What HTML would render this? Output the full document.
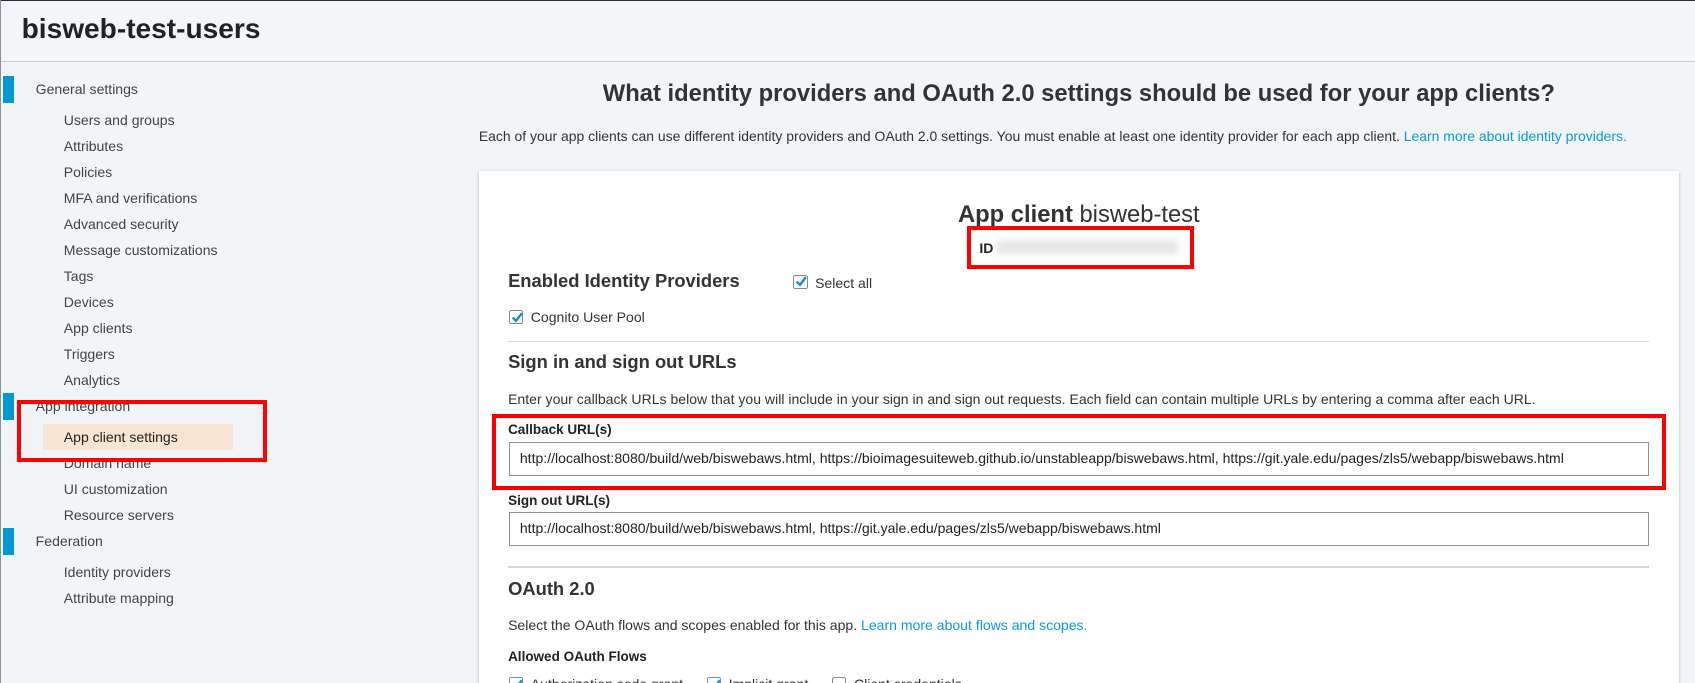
<!DOCTYPE html>
<html><head><meta charset="utf-8"><style>
html,body{margin:0;padding:0;width:1695px;height:683px;overflow:hidden;background:#f2f5f7}
#w{zoom:1.081;position:relative;width:1568px;height:632px;font-family:"Liberation Sans",sans-serif;color:#444;font-size:13px}
.a{position:absolute;white-space:nowrap}
.hdr{left:0;top:0;width:1568px;height:57px;background:#f3f6f8;border-bottom:1px solid #c8cccf;border-top:1px solid #232f3e;box-sizing:border-box}
.mk{position:absolute;left:3px;width:10px;height:25px;background:#0099d3}
.sec{left:33px;font-size:13px;color:#444}
.it{left:59px;color:#444}
.card{left:443px;top:158px;width:1110px;height:500px;background:#fff;box-shadow:0 1px 3px rgba(0,0,0,.25)}
.rb{position:absolute;border:4px solid #f00;box-sizing:border-box}
.cb{position:absolute;width:13px;height:13px;border:1px solid #888;border-radius:2px;background:#fff;box-sizing:border-box}
.cb svg{position:absolute;left:0;top:-1px}
.inp{position:absolute;left:471px;width:1054px;height:31px;border:1px solid #879596;box-sizing:border-box;background:#fff;padding-left:9px;line-height:29px;color:#222;font-size:13px;white-space:nowrap}
.hr{position:absolute;left:470px;width:1055px;height:1px;background:#d5d5d5}
b{color:#333}
.lk{color:#0a9ad8}
</style></head><body><div id="w">
<div class="a hdr"></div>
<div style="position:absolute;left:0;top:0;width:1px;height:632px;background:#8a939c"></div>
<div class="a" style="left:20px;top:12px;font-size:26px;font-weight:bold;color:#222">bisweb-test-users</div>

<div class="mk" style="top:70px"></div>
<div class="mk" style="top:364px"></div>
<div class="mk" style="top:488px"></div>
<div class="a sec" style="top:75px">General settings</div>
<div class="a it" style="top:104px">Users and groups</div>
<div class="a it" style="top:128px">Attributes</div>
<div class="a it" style="top:152px">Policies</div>
<div class="a it" style="top:176px">MFA and verifications</div>
<div class="a it" style="top:200px">Advanced security</div>
<div class="a it" style="top:224px">Message customizations</div>
<div class="a it" style="top:248px">Tags</div>
<div class="a it" style="top:272px">Devices</div>
<div class="a it" style="top:296px">App clients</div>
<div class="a it" style="top:320px">Triggers</div>
<div class="a it" style="top:344px">Analytics</div>
<div class="a sec" style="top:368px">App integration</div>
<div style="position:absolute;left:40px;top:392px;width:176px;height:24px;background:#f7e4d2"></div>
<div class="a it" style="top:397px;color:#222">App client settings</div>
<div class="a it" style="top:421px">Domain name</div>
<div class="a it" style="top:445px">UI customization</div>
<div class="a it" style="top:469px">Resource servers</div>
<div class="a sec" style="top:493px">Federation</div>
<div class="a it" style="top:522px">Identity providers</div>
<div class="a it" style="top:546px">Attribute mapping</div>
<div class="rb" style="left:16px;top:370px;width:231px;height:57px"></div>

<div class="a" style="left:443px;width:1110px;text-align:center;top:74px;font-size:22px;font-weight:bold;color:#333">What identity providers and OAuth 2.0 settings should be used for your app clients?</div>
<div class="a" style="left:443px;top:118px;color:#333;font-size:12.9px">Each of your app clients can use different identity providers and OAuth 2.0 settings. You must enable at least one identity provider for each app client. <span class="lk">Learn more about identity providers.</span></div>

<div class="a card"></div>
<div class="a" style="left:443px;width:1110px;text-align:center;top:186px;font-size:22px;color:#333"><b>App client</b> bisweb-test</div>
<div class="rb" style="left:895px;top:209px;width:210px;height:40px"></div>
<div class="a" style="left:906px;top:222px;font-weight:bold;color:#222;font-size:13px">ID</div>
<div style="position:absolute;left:922px;top:222px;width:168px;height:13px;background:#e6e6e6;filter:blur(3px)"></div>

<div class="a" style="left:470px;top:250px;font-size:17px;font-weight:bold;color:#333">Enabled Identity Providers</div>
<div class="cb" style="left:734px;top:254px"><svg width="13" height="13" viewBox="0 0 13 13"><path d="M2.5 7 L5.5 10 L11 3" stroke="#0a8fd0" stroke-width="2.2" fill="none"/></svg></div>
<div class="a" style="left:754px;top:254px;color:#333">Select all</div>
<div class="cb" style="left:471px;top:287px"><svg width="13" height="13" viewBox="0 0 13 13"><path d="M2.5 7 L5.5 10 L11 3" stroke="#0a8fd0" stroke-width="2.2" fill="none"/></svg></div>
<div class="a" style="left:491px;top:286px;color:#333">Cognito User Pool</div>
<div class="hr" style="top:315px"></div>

<div class="a" style="left:470px;top:325px;font-size:17px;font-weight:bold;color:#333">Sign in and sign out URLs</div>
<div class="a" style="left:470px;top:362px;color:#333">Enter your callback URLs below that you will include in your sign in and sign out requests. Each field can contain multiple URLs by entering a comma after each URL.</div>
<div class="a" style="left:470px;top:390px;font-weight:bold;color:#222;font-size:12.5px">Callback URL(s)</div>
<div class="inp" style="top:409px">http://localhost:8080/build/web/biswebaws.html, https://bioimagesuiteweb.github.io/unstableapp/biswebaws.html, https://git.yale.edu/pages/zls5/webapp/biswebaws.html</div>
<div class="rb" style="left:455px;top:383px;width:1086px;height:70px"></div>
<div class="a" style="left:470px;top:456px;font-weight:bold;color:#222;font-size:12.5px">Sign out URL(s)</div>
<div class="inp" style="top:474px">http://localhost:8080/build/web/biswebaws.html, https://git.yale.edu/pages/zls5/webapp/biswebaws.html</div>
<div class="hr" style="top:524px"></div>

<div class="a" style="left:470px;top:535px;font-size:17px;font-weight:bold;color:#333">OAuth 2.0</div>
<div class="a" style="left:470px;top:571px;color:#333">Select the OAuth flows and scopes enabled for this app. <span class="lk">Learn more about flows and scopes.</span></div>
<div class="a" style="left:470px;top:600px;font-weight:bold;color:#222;font-size:12.5px">Allowed OAuth Flows</div>
<div class="cb" style="left:471px;top:626px"><svg width="13" height="13" viewBox="0 0 13 13"><path d="M2.5 7 L5.5 10 L11 3" stroke="#0a8fd0" stroke-width="2.2" fill="none"/></svg></div>
<div class="a" style="left:491px;top:625px;color:#333">Authorization code grant</div>
<div class="cb" style="left:654px;top:626px"><svg width="13" height="13" viewBox="0 0 13 13"><path d="M2.5 7 L5.5 10 L11 3" stroke="#0a8fd0" stroke-width="2.2" fill="none"/></svg></div>
<div class="a" style="left:674px;top:625px;color:#333">Implicit grant</div>
<div class="cb" style="left:770px;top:626px"></div>
<div class="a" style="left:790px;top:625px;color:#333">Client credentials</div>
</div></body></html>
